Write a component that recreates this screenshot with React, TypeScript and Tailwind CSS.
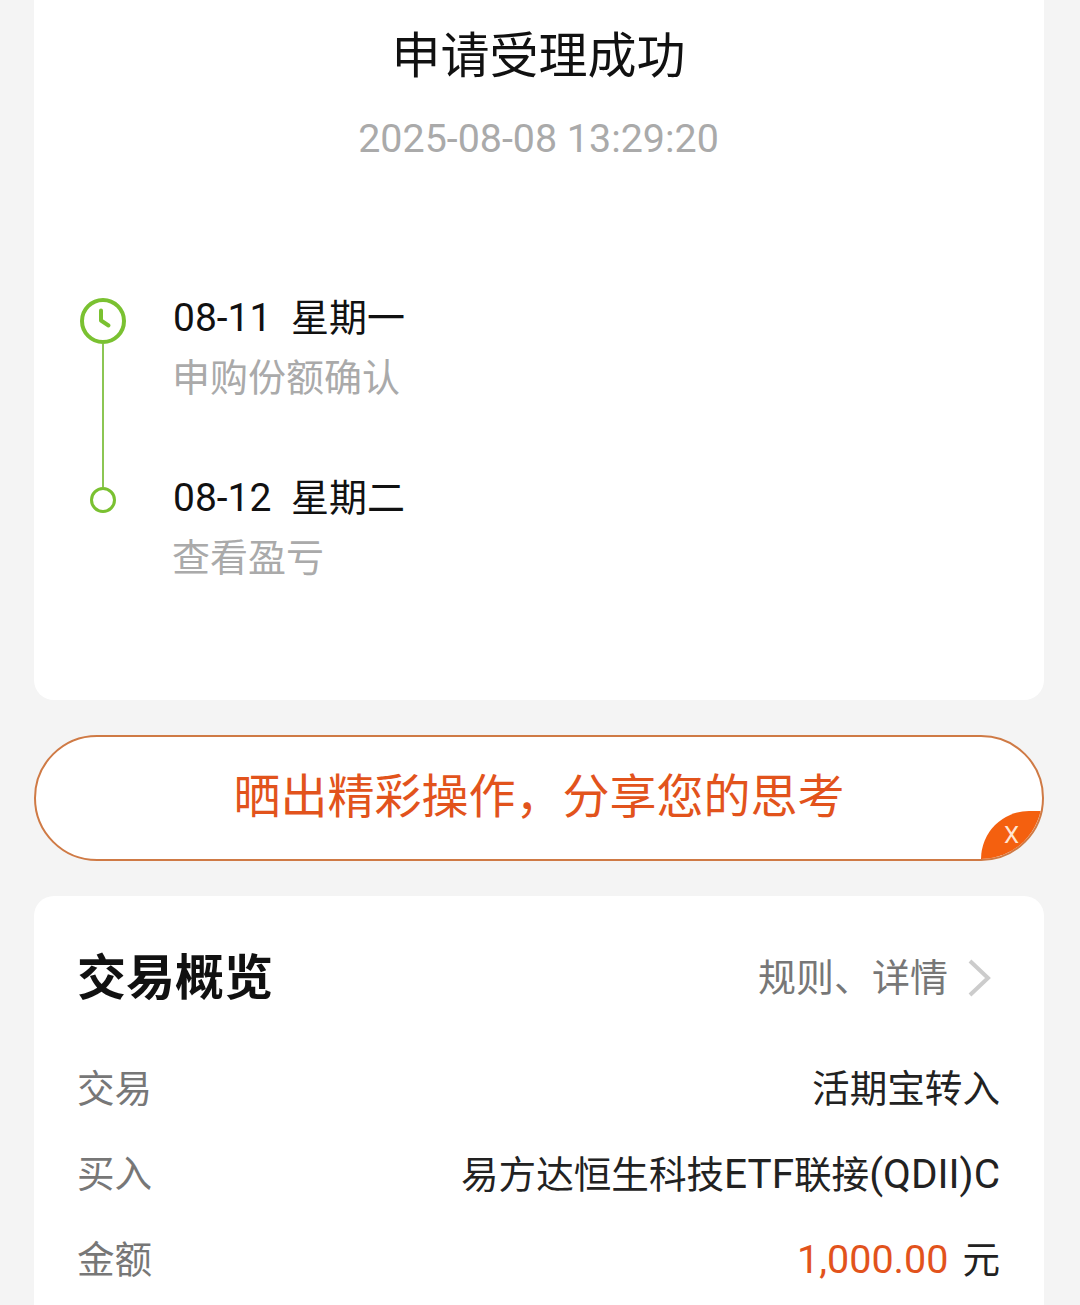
const font = { fontFamily: '"Roboto", "Noto Sans CJK SC", sans-serif' }

function ClockIcon() {
  return (
    <svg width="46" height="46" viewBox="0 0 46 46" fill="none" className="shrink-0">
      <circle cx="23" cy="23" r="21" stroke="#7ac131" strokeWidth="4" />
      <path d="M21 12.5V22.5L28.5 27.5" stroke="#7ac131" strokeWidth="4" strokeLinejoin="round" strokeLinecap="round" />
    </svg>
  )
}

function Step({ date, day, note }: { date: string; day: string; note: string }) {
  return (
    <div className="h-[60px]">
      <div className="flex h-[38px] items-center pt-[2px] text-[38px] leading-none text-[#111]">
        <span className="w-[118px] text-[39px]">{date}</span>
        <span>{day}</span>
      </div>
      <div className="mt-[20px] -ml-px text-[38px] leading-[44px] text-[#aaaaaa]">{note}</div>
    </div>
  )
}

function Row({ label, children }: { label: string; children: React.ReactNode }) {
  return (
    <div className="flex h-[44px] items-center justify-between text-[37.6px]">
      <span className="-ml-px text-[#777777]">{label}</span>
      <span className="text-[#222]">{children}</span>
    </div>
  )
}

export default function App() {
  return (
    <div style={font} className="h-[1305px] overflow-hidden bg-[#f4f4f4] pr-[36px] pl-[34px]">
      <section className="h-[700px] rounded-b-[20px] bg-white pt-[28px]">
        <h1 className="-ml-px text-center text-[49px] leading-[58px] font-normal text-[#111]">申请受理成功</h1>
        <p className="mt-[31px] -ml-px text-center text-[39.4px] leading-[44px] text-[#aaaaaa]">2025-08-08 13:29:20</p>
        <div className="mt-[137px] flex pl-[46px]">
          <div className="flex w-[46px] flex-col items-center">
            <ClockIcon />
            <div className="h-[143px] w-[2px] bg-[#8cc653]" />
            <div className="size-[26px] rounded-full border-[3px] border-[#7ac131]" />
          </div>
          <div className="ml-[47px] flex flex-col gap-[120px]">
            <Step date="08-11" day="星期一" note="申购份额确认" />
            <Step date="08-12" day="星期二" note="查看盈亏" />
          </div>
        </div>
      </section>

      <div className="relative mt-[35px] flex h-[126px] items-center justify-center overflow-hidden rounded-full border-2 border-[#cf7a45] bg-white">
        <span className="-mt-[2px] text-[47px] text-[#e2531c]">晒出精彩操作，分享您的思考</span>
        <span className="absolute right-0 bottom-0 flex h-[48px] w-[61px] items-center justify-center rounded-tl-[48px] rounded-br-[48px] bg-[#f4600f] text-[24px] text-[#ffe6d2]">
          X
        </span>
      </div>

      <section className="mt-[35px] h-[500px] rounded-t-[20px] bg-white pt-[47px] pr-[44px] pl-[44px]">
        <div className="flex h-[70px] items-center justify-between">
          <h2 className="-ml-px text-[49px] leading-none font-bold text-[#111]">交易概览</h2>
          <div className="flex items-center text-[38px] text-[#777777]">
            <span>规则、详情</span>
            <svg width="26" height="40" viewBox="0 0 26 40" fill="none" className="mr-[7px] ml-[19px]">
              <path d="M3 3L21 20L3 37" stroke="#cccccc" strokeWidth="4" />
            </svg>
          </div>
        </div>
        <div className="mt-[54px] flex flex-col gap-[41.5px]">
          <Row label="交易">活期宝转入</Row>
          <Row label="买入">
            易方达恒生科技<span className="text-[40.5px]">ETF</span>联接<span className="text-[40.5px]">(QDII)C</span>
          </Row>
          <Row label="金额">
            <span className="text-[39.5px] text-[#e2531c]">1,000.00</span>
            <span className="ml-[14px]">元</span>
          </Row>
        </div>
      </section>
    </div>
  )
}
